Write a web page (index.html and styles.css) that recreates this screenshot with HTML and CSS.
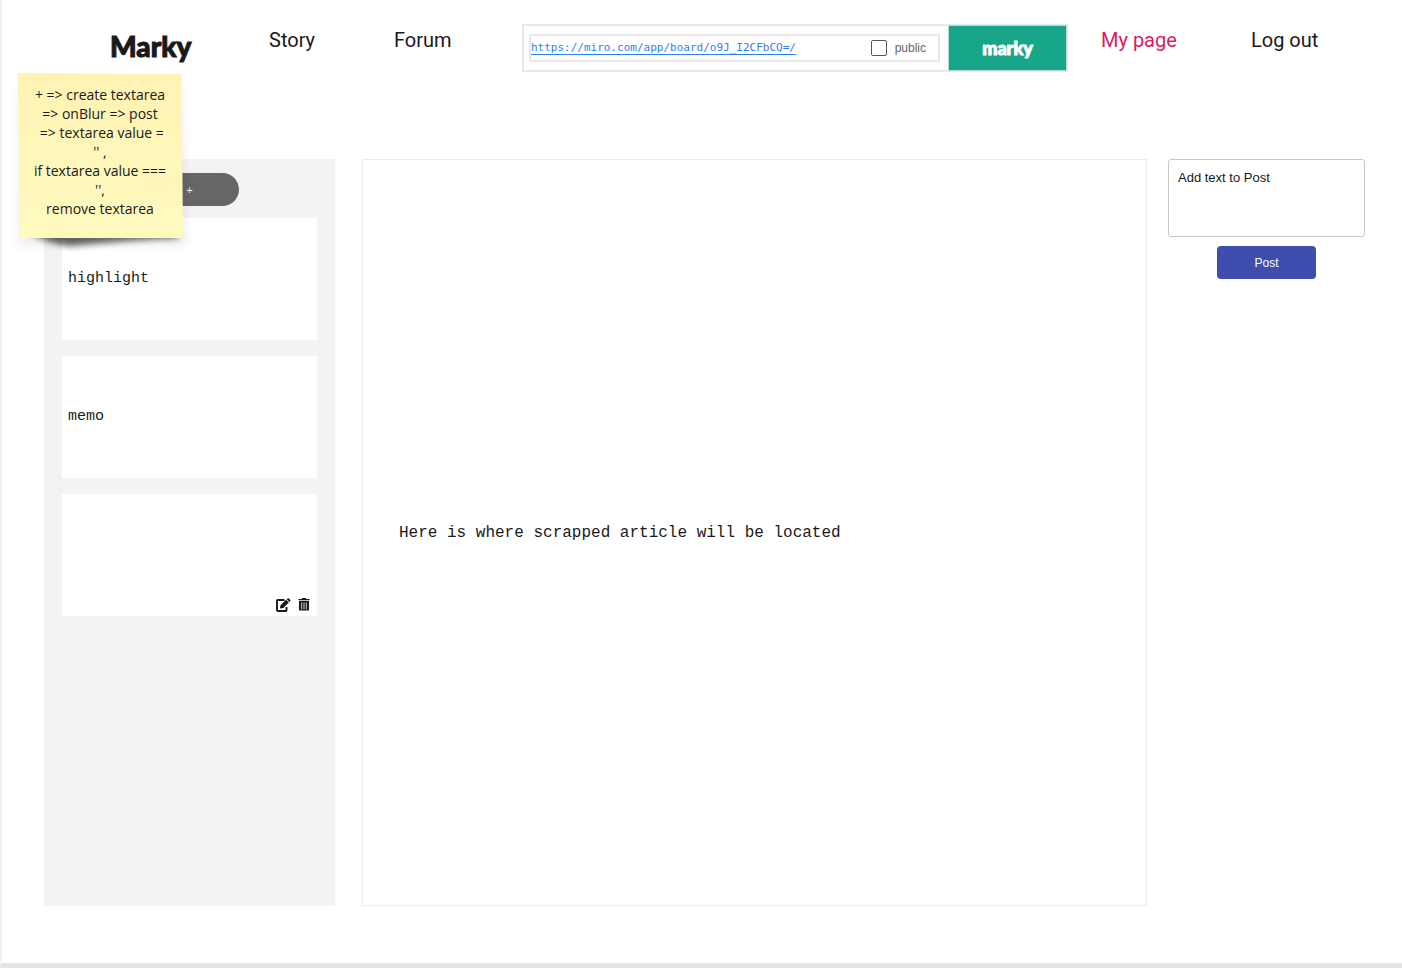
FILE: index.html
```html
<!DOCTYPE html>
<html lang="en">
<head>
<meta charset="utf-8">
<meta name="viewport" content="width=device-width, initial-scale=1">
<title>Marky</title>
<link rel="stylesheet" href="styles.css">
</head>
<body>
<div class="page">
  <header class="header">
    <a class="logo" href="#">Marky</a>
    <a class="nav-link" href="#">Story</a>
    <a class="nav-link" href="#">Forum</a>
    <form class="scrap">
      <div class="scrap-field">
        <a class="scrap-url" href="#">https://miro.com/app/board/o9J_I2CFbCQ=/</a>
        <label class="public"><input class="public-box" type="checkbox">public</label>
      </div>
      <button class="scrap-button" type="button">marky</button>
    </form>
    <a class="nav-link nav-link-active" href="#">My page</a>
    <a class="nav-link" href="#">Log out</a>
  </header>

  <main class="content">
    <aside class="sidebar">
      <button class="add-button" type="button" aria-label="Add note">+</button>
      <section class="note">highlight</section>
      <section class="note">memo</section>
      <section class="note">
        <div class="note-actions">
          <button class="icon-button" type="button" aria-label="Edit">
            <svg width="15" height="14" viewBox="0 0 15 14">
              <path d="M8.500 2H1.800Q1 2 1 2.800V12.200Q1 13 1.800 13H9.700Q10.500 13 10.500 12.200V9" fill="none" stroke="#1a1a1a" stroke-width="1.900"/>
              <path d="M3.900 10.600L4.500 7.200L10 1.700L12.900 4.600L7.400 10.100ZM10.700 1.200L11.500.4Q12.300-.1 12.900.4L14.200 1.700Q14.700 2.300 14.200 3.100L13.400 3.900Z" fill="#1a1a1a"/>
            </svg>
          </button>
          <button class="icon-button" type="button" aria-label="Delete">
            <svg width="12" height="14" viewBox="0 0 12 14">
              <path d="M4 0H8V1H11.500V2.200H.5V1H4Z" fill="#1a1a1a"/>
              <path d="M1 3H11V12.500H1Z" fill="#1a1a1a"/>
              <path d="M3.700 4.500V11.300M6 4.500V11.300M8.300 4.500V11.300" stroke="#fff" stroke-width=".8"/>
            </svg>
          </button>
        </div>
      </section>
    </aside>

    <article class="article">Here is where scrapped article will be located</article>

    <form class="post">
      <textarea class="post-text" aria-label="Post text">Add text to Post</textarea>
      <button class="post-button" type="button">Post</button>
    </form>
  </main>

  <div class="sticky">
    <svg class="sticky-paper" width="184" height="200" viewBox="0 0 184 200" aria-hidden="true">
      <defs>
        <linearGradient id="paper" x1="0" y1="0" x2="0" y2="1">
          <stop offset="0" stop-color="#fff2b3"/>
          <stop offset=".5" stop-color="#fff7b9"/>
          <stop offset="1" stop-color="#fffabf"/>
        </linearGradient>
        <filter id="soft" x="-20%" y="-100%" width="140%" height="300%"><feGaussianBlur stdDeviation="3"/></filter>
        <filter id="wide" x="-20%" y="-20%" width="140%" height="140%"><feGaussianBlur stdDeviation="4"/></filter>
      </defs>
      <path d="M8 20L173 20L176 178L8 178Z" fill="#000" opacity=".06" filter="url(#wide)"/>
      <path d="M20 160H168V170Q120 172 60 178Q40 176 20 165Z" fill="#000" opacity=".6" filter="url(#soft)"/>
      <path d="M8 5L171.500 6L173 170L9.500 170Z" fill="url(#paper)" opacity=".99"/>
    </svg>
    <p class="sticky-text">+ =&gt; create textarea<br>=&gt; onBlur =&gt; post<br>&nbsp;=&gt; textarea value =<br>'' ,<br>if textarea value ===<br>'',<br>remove textarea</p>
  </div>
</div>
</body>
</html>
```

FILE: styles.css
```css
* {
  box-sizing: border-box;
}

body {
  margin: 0;
  background: #fff;
  color: #1a1a1a;
  font-family: "Liberation Sans", Arial, sans-serif;
}

button {
  border: 0;
  padding: 0;
  font-family: inherit;
  cursor: pointer;
}

.page {
  position: relative;
  display: flex;
  flex-direction: column;
  min-height: 100vh;
  border-left: 2px solid #f2f2f2;
  border-bottom: 5px solid #e5e5e5;
}

.header {
  display: grid;
  grid-template-columns: 159fr 125fr 128fr 579fr 150fr 151fr;
  padding: 24px 0 0 108px;
}

.logo {
  color: #1a1a1a;
  font: 900 28px/44px Lato, sans-serif;
  -webkit-text-stroke: 1px #1a1a1a;
  text-decoration: none;
}

.nav-link {
  color: #1a1a1a;
  font: 20px/32px Roboto, sans-serif;
  text-decoration: none;
  white-space: nowrap;
}

.nav-link-active {
  color: #da1a63;
}

.scrap {
  display: flex;
  height: 48px;
  margin-right: 33px;
  border: 2px solid #e8e8e8;
}

.scrap-field {
  display: flex;
  flex: 1;
  align-items: center;
  justify-content: space-between;
  height: 28px;
  margin: 8px 8px 0 5px;
  padding-right: 12px;
  border: 2px solid #e8e8e8;
}

.scrap-url {
  color: #2d7ff9;
  font: 11px/16px "DejaVu Sans Mono", monospace;
  text-underline-offset: 3px;
}

.public {
  display: flex;
  align-items: center;
  gap: 8px;
  color: #666;
  font-size: 12px;
}

.public-box {
  appearance: none;
  width: 16px;
  height: 16px;
  margin: 0;
  border: 1px solid #555;
  border-radius: 2px;
  background: #fff;
}

.public-box:checked {
  background: #18a689;
}

.scrap-button {
  width: 119px;
  margin: -1px -1px -1px 0;
  border: 1px solid #b9d9d2;
  background: #18a689;
  color: #fff;
  font: 900 18px/24px Lato, sans-serif;
  -webkit-text-stroke: 1px #fff;
}

.content {
  display: grid;
  flex: 1;
  grid-template-columns: 291fr 791fr 197fr;
  gap: 21px;
  padding: 87px 37px 57px 42px;
}

.sidebar {
  display: flex;
  flex-direction: column;
  gap: 16px;
  padding: 14px 18px;
  background: #f3f3f3;
}

.add-button {
  align-self: center;
  width: 99px;
  height: 33px;
  margin-bottom: -4px;
  border-radius: 17px;
  background: #666;
  color: #fff;
  font-size: 11px;
}

.note {
  display: flex;
  align-items: center;
  height: 122px;
  padding: 4px 7px 4px 6px;
  background: #fff;
  font: 15px/20px "Liberation Mono", monospace;
}

.note-actions {
  display: flex;
  align-self: flex-end;
  gap: 7px;
  margin-left: auto;
}

.icon-button {
  display: flex;
  background: none;
}

.article {
  display: flex;
  align-items: center;
  margin-left: 6px;
  padding: 0 36px;
  border: 1px solid #ebebeb;
  font: 16px/24px "Liberation Mono", monospace;
}

.post {
  display: flex;
  flex-direction: column;
  align-items: center;
  gap: 9px;
}

.post-text {
  width: 100%;
  height: 78px;
  padding: 10px 9px;
  border: 1px solid #c8c8c8;
  border-radius: 3px;
  background: #fff;
  color: #1a1a1a;
  font: 13px/16px "Liberation Sans", Arial, sans-serif;
  resize: none;
}

.post-button {
  width: 99px;
  height: 33px;
  border-radius: 4px;
  background: #3f4eae;
  color: #fff;
  font-size: 12px;
}

.sticky {
  position: absolute;
  top: 68px;
  left: 8px;
  width: 184px;
}

.sticky-paper {
  position: absolute;
  top: 0;
  left: 0;
}

.sticky-text {
  position: relative;
  margin: 0;
  padding-top: 17px;
  padding-right: 4px;
  font: 14px/19px "Open Sans", sans-serif;
  text-align: center;
  white-space: nowrap;
}
```
